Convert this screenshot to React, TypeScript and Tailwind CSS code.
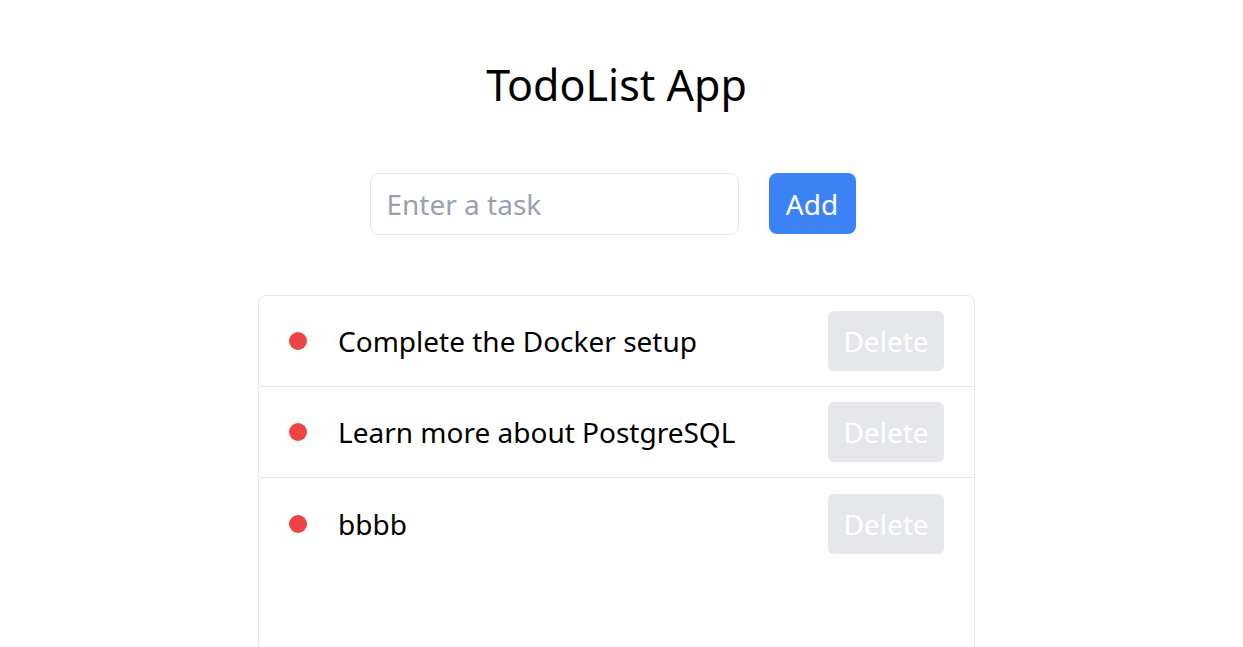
const todos = ["Complete the Docker setup", "Learn more about PostgreSQL", "bbbb"];

export default function App() {
  return (
    <div className="min-h-screen bg-white pr-[10px] pt-[55px] font-['Noto_Sans',sans-serif] text-black">
      <h1 className="text-center text-[43px] leading-[60px]">TodoList App</h1>

      <div className="mt-[58px] flex justify-center gap-[30px] pr-[8px]">
        <input
          type="text"
          placeholder="Enter a task"
          className="h-[62px] w-[369px] rounded-lg border border-gray-200 px-4 text-[28px] outline-none placeholder:text-gray-400"
        />
        <button className="h-[61px] w-[87px] rounded-lg bg-[#3b82f6] text-[28px] text-white">
          Add
        </button>
      </div>

      <div className="mx-auto mt-[60px] min-h-[360px] w-[717px] rounded-lg border border-gray-200">
        {todos.map((t, i) => (
          <div
            key={t}
            className={
              "flex h-[91px] items-center px-[30px] " +
              (i < todos.length - 1 ? "border-b border-gray-200" : "")
            }
          >
            <span className="h-[18px] w-[18px] rounded-full bg-[#ef4444]" />
            <span className="ml-[31px] flex-1 text-[28px]">{t}</span>
            <button className="h-[60px] w-[116px] rounded-md bg-gray-200 text-[28px] text-white">
              Delete
            </button>
          </div>
        ))}
      </div>
    </div>
  );
}
